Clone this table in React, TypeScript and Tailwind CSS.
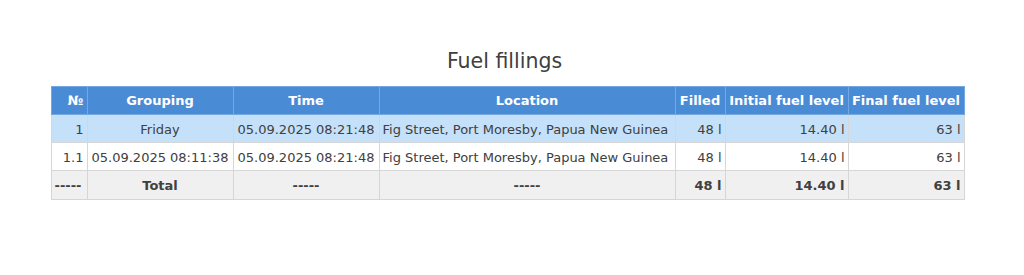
const rows = [
  { n: '1', g: 'Friday', t: '05.09.2025 08:21:48', loc: 'Fig Street, Port Moresby, Papua New Guinea', f: '48 l', i: '14.40 l', e: '63 l', hl: true },
  { n: '1.1', g: '05.09.2025 08:11:38', t: '05.09.2025 08:21:48', loc: 'Fig Street, Port Moresby, Papua New Guinea', f: '48 l', i: '14.40 l', e: '63 l', hl: false },
];

export default function App() {
  const th = 'border border-[#74a8e2] px-[3px] pt-[1px] h-[28px] font-bold text-white';
  const td = 'border border-[#d6d6d6] px-[3px] pt-[2px] h-[28px]';
  return (
    <div className="w-[1024px] h-[275px] bg-white pr-[9px] font-['DejaVu_Sans',sans-serif] text-[#404040] text-[13px]">
      <div className="pt-[49px] pb-[12px] pr-[6px] text-center text-[20.5px] leading-[25px] text-[#404040]">Fuel fillings</div>
      <table className="mx-auto border-collapse">
        <thead>
          <tr className="bg-[#4a8bd6]">
            <th className={`${th} w-[36px] text-right`}>№</th>
            <th className={`${th} w-[146px] text-center`}>Grouping</th>
            <th className={`${th} w-[146px] text-center`}>Time</th>
            <th className={`${th} w-[296px] text-center`}>Location</th>
            <th className={`${th} w-[50px] text-center`}>Filled</th>
            <th className={`${th} w-[123px] text-center`}>Initial fuel level</th>
            <th className={`${th} w-[116px] text-center`}>Final fuel level</th>
          </tr>
        </thead>
        <tbody>
          {rows.map((r) => (
            <tr key={r.n} className={r.hl ? 'bg-[#c5e1fa]' : 'bg-white'}>
              <td className={`${td} text-right`}>{r.n}</td>
              <td className={`${td} text-center whitespace-nowrap`}>{r.g}</td>
              <td className={`${td} text-center whitespace-nowrap`}>{r.t}</td>
              <td className={`${td} text-left whitespace-nowrap`}>{r.loc}</td>
              <td className={`${td} text-right`}>{r.f}</td>
              <td className={`${td} text-right`}>{r.i}</td>
              <td className={`${td} text-right`}>{r.e}</td>
            </tr>
          ))}
          <tr className="bg-[#f0f0f0] font-bold">
            <td className={`${td} h-[29px] text-left`}>-----</td>
            <td className={`${td} h-[29px] text-center`}>Total</td>
            <td className={`${td} h-[29px] text-center`}>-----</td>
            <td className={`${td} h-[29px] text-center`}>-----</td>
            <td className={`${td} h-[29px] text-right`}>48 l</td>
            <td className={`${td} h-[29px] text-right`}>14.40 l</td>
            <td className={`${td} h-[29px] text-right`}>63 l</td>
          </tr>
        </tbody>
      </table>
    </div>
  );
}
